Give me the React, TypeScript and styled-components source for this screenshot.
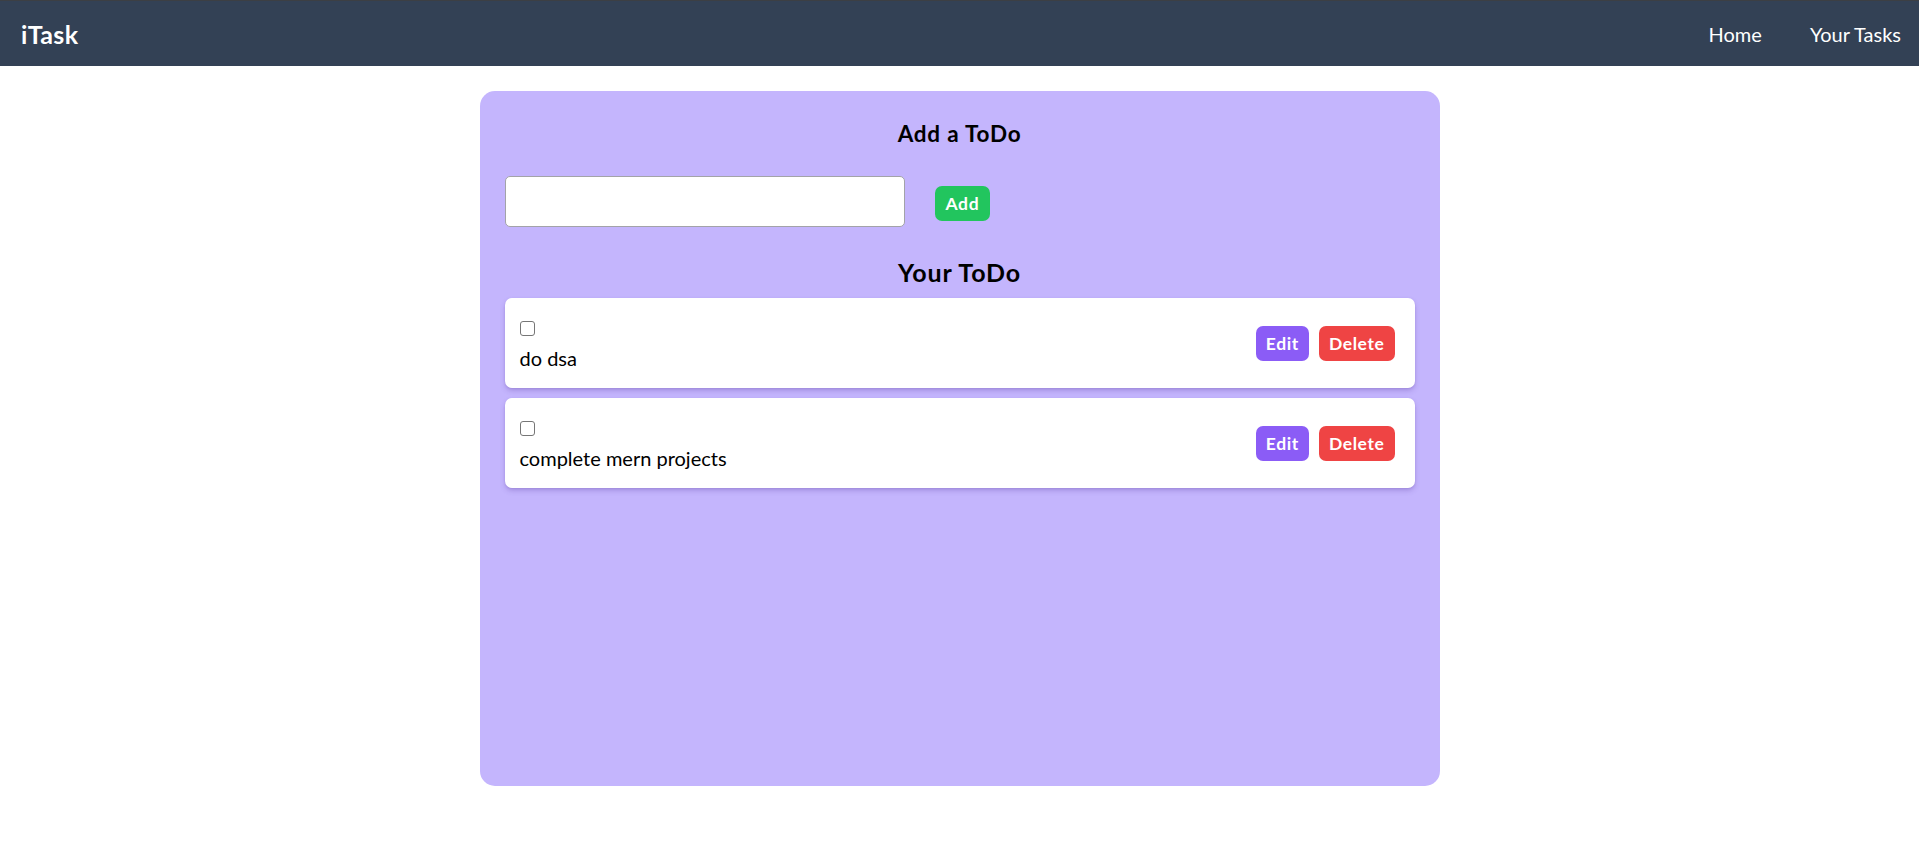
import React from "react";
import styled, { createGlobalStyle } from "styled-components";

const GlobalStyle = createGlobalStyle`
  * { box-sizing: border-box; }
  html, body { margin: 0; padding: 0; background: #ffffff; }
  body {
    font-family: "Lato", "Open Sans", sans-serif;
    color: #000000;
  }
`;

const Nav = styled.nav`
  display: flex;
  justify-content: space-between;
  align-items: center;
  height: 66px;
  padding: 0 18px 0 21px;
  background: #334155;
  border-top: 1px solid #3c3f44;
  color: #ffffff;
`;

const Logo = styled.span`
  font-size: 25px;
  font-weight: 700;
  letter-spacing: 0.4px;
`;

const NavList = styled.ul`
  display: flex;
  gap: 48px;
  margin: 0;
  padding: 0;
  list-style: none;
`;

const NavItem = styled.li`
  font-size: 20px;
  cursor: pointer;
`;

const Main = styled.main`
  width: 960px;
  min-height: 695px;
  margin: 25px auto;
  padding: 25px;
  border-radius: 15px;
  background: #c4b5fd;
`;

const Heading = styled.h2<{ $size: number; $gap: number }>`
  margin: ${(p) => p.$gap}px 0 0;
  text-align: center;
  font-size: ${(p) => p.$size}px;
  font-weight: 700;
  line-height: 35px;
  letter-spacing: 0.035em;
`;

const AddRow = styled.div`
  display: flex;
  align-items: center;
  gap: 30px;
  margin-top: 25px;
`;

const TextInput = styled.input`
  width: 400px;
  height: 51px;
  padding: 0 12px;
  border: 1px solid #a3a3a8;
  border-radius: 5px;
  background: #ffffff;
  font: inherit;
  font-size: 18px;
  outline: none;
`;

const Button = styled.button<{ $bg: string }>`
  height: 35px;
  padding: 0 10px;
  border: none;
  border-radius: 7px;
  background: ${(p) => p.$bg};
  color: #ffffff;
  font-family: inherit;
  font-size: 17.5px;
  font-weight: 700;
  letter-spacing: 0.035em;
  cursor: pointer;
`;

const AddButton = styled(Button)`
  margin-top: 3px;
  padding: 0 11px;
`;

const TodoList = styled.div`
  display: flex;
  flex-direction: column;
  gap: 10px;
  margin-top: 8px;
`;

const TodoCard = styled.div`
  display: flex;
  justify-content: space-between;
  align-items: center;
  height: 90px;
  padding: 15px 20px 15px 15px;
  border-radius: 7px;
  background: #ffffff;
  box-shadow: 0 3px 5px rgba(90, 60, 160, 0.25), 0 1px 2px rgba(90, 60, 160, 0.15);
`;

const TodoLeft = styled.div`
  display: flex;
  flex-direction: column;
`;

const CheckRow = styled.div`
  display: flex;
  align-items: center;
  height: 30px;
`;

const Check = styled.input`
  appearance: none;
  width: 15px;
  height: 15px;
  margin: 0;
  border: 1px solid #767676;
  border-radius: 3px;
  background: #ffffff;
`;

const TodoText = styled.div`
  font-size: 20px;
  line-height: 30px;
`;

const Actions = styled.div`
  display: flex;
  gap: 10px;
`;

const todos = [
  { id: 1, text: "do dsa" },
  { id: 2, text: "complete mern projects" },
];

export default function App() {
  return (
    <>
      <GlobalStyle />
      <Nav>
        <Logo>iTask</Logo>
        <NavList>
          <NavItem>Home</NavItem>
          <NavItem>Your Tasks</NavItem>
        </NavList>
      </Nav>
      <Main>
        <Heading $size={22.5} $gap={0}>Add a ToDo</Heading>
        <AddRow>
          <TextInput type="text" />
          <AddButton $bg="#22c55e">Add</AddButton>
        </AddRow>
        <Heading $size={25} $gap={28}>Your ToDo</Heading>
        <TodoList>
          {todos.map((t) => (
            <TodoCard key={t.id}>
              <TodoLeft>
                <CheckRow>
                  <Check type="checkbox" />
                </CheckRow>
                <TodoText>{t.text}</TodoText>
              </TodoLeft>
              <Actions>
                <Button $bg="#8b5cf6">Edit</Button>
                <Button $bg="#ef4444">Delete</Button>
              </Actions>
            </TodoCard>
          ))}
        </TodoList>
      </Main>
    </>
  );
}
